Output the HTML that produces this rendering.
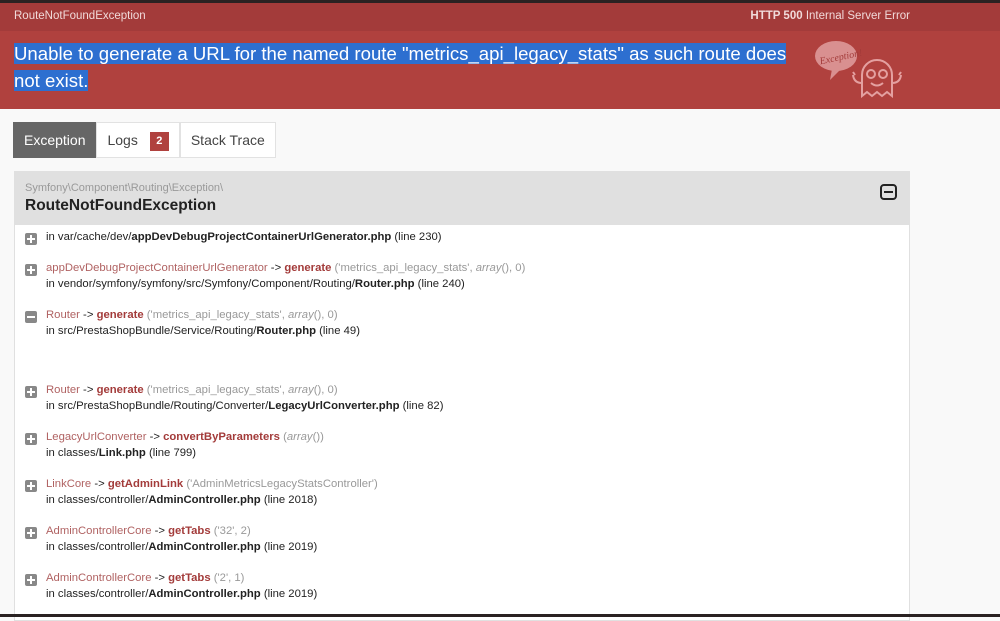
<!DOCTYPE html>
<html><head><meta charset="utf-8"><style>
*{margin:0;padding:0;box-sizing:border-box}
body{width:1000px;height:617px;overflow:hidden;background:#f9f9f9;font-family:"Liberation Sans",Arial,sans-serif;position:relative;color:#222}
.top{position:absolute;left:0;top:0;width:1000px;height:3px;background:#2a2222}
.bar{position:absolute;left:0;top:3px;width:1000px;height:28px;background:#a33b3a;color:#f1dada;font-size:11.5px}
.bar .bl{position:absolute;left:14px;top:7px}
.bar .br{position:absolute;right:90px;top:7px}
.hd{position:absolute;left:0;top:31px;width:1000px;height:78px;background:#b0413e}
.msg{position:absolute;left:14px;top:9px;font-size:18.6px;line-height:27px;color:#fff;width:790px}
.msg span{background:#2d6fd0}
.tabs{position:absolute;left:13px;top:122px;height:36px;display:flex}
.tab{height:36px;line-height:34px;padding:0 10px;font-size:14px;background:#fff;border:1px solid #e2e2e2;color:#444}
.tab.a{background:#666;color:#fff;border-color:#666}
.badge{display:inline-block;background:#b0413e;color:#fff;font-size:11px;font-weight:bold;width:19px;height:19px;line-height:19px;text-align:center;margin-left:12px;vertical-align:1px}
.box{position:absolute;left:14px;top:171px;width:896px;height:450px;background:#fff;border:1px solid #e0e0e0}
.bh{position:absolute;left:0;top:0;width:100%;height:53px;background:#e0e0e0}
.ns{position:absolute;left:10px;top:10px;font-size:11px;color:#999}
.cn{position:absolute;left:10px;top:25px;font-size:15.5px;font-weight:bold;color:#222}
.tg{position:absolute;right:12px;top:12px;width:17px;height:16px;border:2px solid #222;border-radius:4px}
.tg:after{content:"";position:absolute;left:2px;right:2px;top:5px;height:2px;background:#222}
.t{position:absolute;left:46px;font-size:11.3px;color:#222;white-space:nowrap}
.t b{font-weight:bold}
.c{color:#b06262}.m{color:#a33b3a;font-weight:bold}.g{color:#999}.g i{font-style:italic}
.ic{position:absolute;left:25px;width:12px;height:12px;background:#888;border-radius:2px}
.ic:before{content:"";position:absolute;left:2px;right:2px;top:5px;height:2px;background:#fff}
.ic.p:after{content:"";position:absolute;top:2px;bottom:2px;left:5px;width:2px;background:#fff}
.bot{position:absolute;left:0;top:614px;width:1000px;height:3px;background:#2a2222}
</style></head><body>
<div class="top"></div>
<div class="bar"><span class="bl">RouteNotFoundException</span><span class="br"><b>HTTP 500</b> Internal Server Error</span></div>
<div class="hd">
<div class="msg"><span>Unable to generate a URL for the named route "metrics_api_legacy_stats" as such route does not exist.</span></div>
<svg style="position:absolute;left:812px;top:8px" width="100" height="62" viewBox="0 0 100 62">
<ellipse cx="24" cy="17" rx="21" ry="15" fill="#d99090"/>
<path d="M20 30 L18 41 L28 31Z" fill="#d99090"/>
<text x="7" y="22" font-family="Liberation Serif" font-style="italic" font-size="10" fill="#a33b3a" transform="rotate(-12 24 17)">Exception!</text>
<path d="M50 57 V36 a15 15 0 0 1 30 0 V57 l-5 -4 l-5 4 l-5 -4 l-5 4 l-5 -4z" fill="none" stroke="#e4a0a0" stroke-width="2"/>
<circle cx="59" cy="35" r="4" fill="none" stroke="#e4a0a0" stroke-width="2"/><circle cx="71" cy="35" r="4" fill="none" stroke="#e4a0a0" stroke-width="2"/>
<path d="M59 44 q6 5 12 0" fill="none" stroke="#e4a0a0" stroke-width="2"/>
<path d="M50 44 q-8 0 -9 -8 M43 36 l-2 -3 M80 44 q8 0 9 -8 M87 36 l2 -3" fill="none" stroke="#e4a0a0" stroke-width="2"/>
</svg>
</div>
<div class="tabs"><div class="tab a">Exception</div><div class="tab">Logs<span class="badge">2</span></div><div class="tab">Stack Trace</div></div>
<div class="box"><div class="bh"><div class="ns">Symfony\Component\Routing\Exception\</div><div class="cn">RouteNotFoundException</div><div class="tg"></div></div></div>

<div class="ic p" style="top:233px"></div><div class="t" style="top:231px">in var/cache/dev/<b>appDevDebugProjectContainerUrlGenerator.php</b> (line 230)</div>

<div class="ic p" style="top:264px"></div><div class="t" style="top:262px"><span class="c">appDevDebugProjectContainerUrlGenerator</span> -&gt; <span class="m">generate</span> <span class="g">('metrics_api_legacy_stats', <i>array</i>(), 0)</span></div>
<div class="t" style="top:278px">in vendor/symfony/symfony/src/Symfony/Component/Routing/<b>Router.php</b> (line 240)</div>

<div class="ic" style="top:311px"></div><div class="t" style="top:309px"><span class="c">Router</span> -&gt; <span class="m">generate</span> <span class="g">('metrics_api_legacy_stats', <i>array</i>(), 0)</span></div>
<div class="t" style="top:325px">in src/PrestaShopBundle/Service/Routing/<b>Router.php</b> (line 49)</div>

<div class="ic p" style="top:386px"></div><div class="t" style="top:384px"><span class="c">Router</span> -&gt; <span class="m">generate</span> <span class="g">('metrics_api_legacy_stats', <i>array</i>(), 0)</span></div>
<div class="t" style="top:400px">in src/PrestaShopBundle/Routing/Converter/<b>LegacyUrlConverter.php</b> (line 82)</div>

<div class="ic p" style="top:433px"></div><div class="t" style="top:431px"><span class="c">LegacyUrlConverter</span> -&gt; <span class="m">convertByParameters</span> <span class="g">(<i>array</i>())</span></div>
<div class="t" style="top:447px">in classes/<b>Link.php</b> (line 799)</div>

<div class="ic p" style="top:480px"></div><div class="t" style="top:478px"><span class="c">LinkCore</span> -&gt; <span class="m">getAdminLink</span> <span class="g">('AdminMetricsLegacyStatsController')</span></div>
<div class="t" style="top:494px">in classes/controller/<b>AdminController.php</b> (line 2018)</div>

<div class="ic p" style="top:527px"></div><div class="t" style="top:525px"><span class="c">AdminControllerCore</span> -&gt; <span class="m">getTabs</span> <span class="g">('32', 2)</span></div>
<div class="t" style="top:541px">in classes/controller/<b>AdminController.php</b> (line 2019)</div>

<div class="ic p" style="top:574px"></div><div class="t" style="top:572px"><span class="c">AdminControllerCore</span> -&gt; <span class="m">getTabs</span> <span class="g">('2', 1)</span></div>
<div class="t" style="top:588px">in classes/controller/<b>AdminController.php</b> (line 2019)</div>
<div class="bot"></div>
</body></html>
